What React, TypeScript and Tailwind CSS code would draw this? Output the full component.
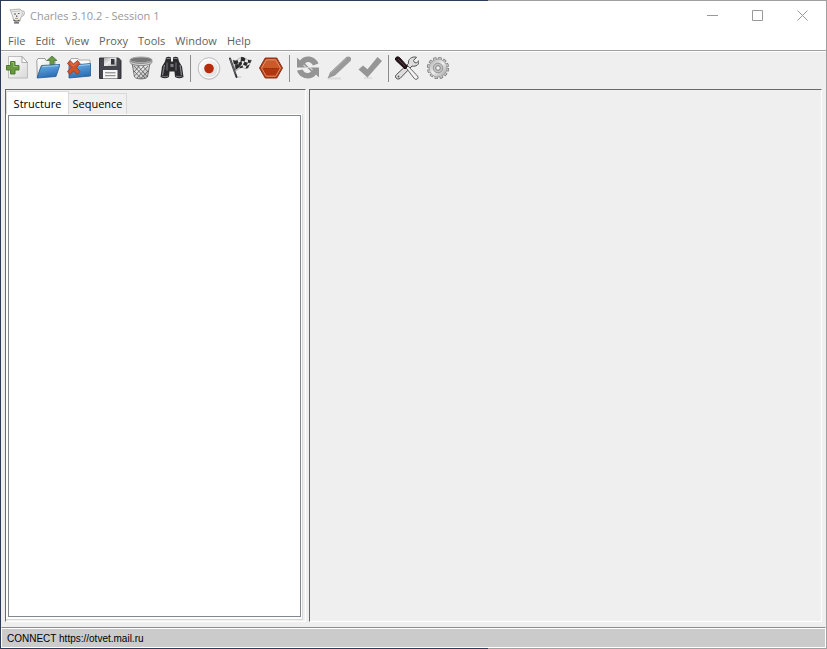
import type { ReactNode } from "react";

const menuItems = ["File", "Edit", "View", "Proxy", "Tools", "Window", "Help"];

interface IconProps {
  children: ReactNode;
}

function Icon({ children }: IconProps) {
  return (
    <svg viewBox="0 0 24 24" className="block size-6" aria-hidden="true">
      {children}
    </svg>
  );
}

function NewIcon() {
  return (
    <Icon>
      <path d="M3.5 .5h13.500l5.5 6v15.500h-19z" fill="url(#paper)" stroke="#b0b0b0" strokeWidth=".8" />
      <path d="M17 .5v6h5.5z" fill="#fff" stroke="#999" strokeWidth=".8" />
      <path d="M5.500 5.500H10v4h4v4.500h-4v4H5.500v-4h-4V9.500h4z" fill="#68993f" stroke="#4c7a31" />
      <path d="M6.500 6.500h2v4h4" fill="none" stroke="#9cc77c" strokeWidth=".8" />
    </Icon>
  );
}

function OpenIcon() {
  return (
    <Icon>
      <path d="M.8 4.5 2 2.500h7l1 2h9v6H5L1.300 21z" fill="url(#paper)" stroke="#888" strokeWidth=".8" />
      <path d="M16 0l5 4.500h-3V9h-4V4.500h-3z" fill="#6c9948" stroke="#4d7a34" strokeWidth=".8" />
      <path d="M5.500 9.500 24 8.500 20 20.500 1 22z" fill="url(#blue)" stroke="#245b94" strokeWidth=".8" />
      <path d="M6.300 10.600 22.500 9.600" stroke="#a7d0f2" strokeWidth=".9" />
    </Icon>
  );
}

function CloseIcon() {
  return (
    <Icon>
      <path d="M3 4.500 4 2.500h7l1 1.500h11v8H3z" fill="#fafafa" stroke="#999" strokeWidth=".8" />
      <path d="M2 9.500 23.500 7.500V20L2 22z" fill="url(#blue)" stroke="#245b94" strokeWidth=".8" />
      <path d="M11 9.700 23 8.500" stroke="#a7d0f2" strokeWidth=".9" />
      <path
        d="M3 4.500 6.500 8l4-3.500 2.500 3-3.500 4 3.500 4-2.500 3-4-3.500L3 18.500l-2.500-3 3.500-4-3.500-4z"
        fill="#d4512c"
        stroke="#a23b22"
        strokeWidth=".9"
      />
      <path d="M3.500 7l3 3L10 6.500" fill="none" stroke="#ea8561" strokeWidth=".9" />
    </Icon>
  );
}

function SaveIcon() {
  return (
    <Icon>
      <path d="M1.500 2h19L23 4.500v18H1.500z" fill="#45454e" stroke="#292930" strokeWidth=".9" />
      <path d="M6 1.500h12.500V10H6z" fill="url(#metal)" />
      <path d="M13 3h3.500v5.500H13z" fill="#33333b" />
      <path d="M5 14h14.500v8.500H5z" fill="#f7f7f7" />
      <path d="M7 16.800h10.500M7 19.700h10.500" stroke="#777" />
    </Icon>
  );
}

function TrashIcon() {
  return (
    <Icon>
      <path d="M2.500 4h19l-3 17c-2 2.500-11 2.500-13 0z" fill="url(#metal)" stroke="#555" strokeWidth=".8" />
      <path
        d="M5 10l11 12M7 8l11.500 13M12 8l7 8M5 15l7 7.500M19 10 8 22M17 8 5.500 20M12 8l-7 8M19 15l-7 7.500"
        stroke="#575757"
        strokeWidth=".8"
      />
      <ellipse cx="12" cy="3.800" rx="11" ry="2.800" fill="#777" stroke="#aaa" />
      <path d="M1 4.500c2 4 20 4 22 0v2c-2 4-20 4-22 0z" fill="#d6d6d6" stroke="#6e6e6e" strokeWidth=".7" />
    </Icon>
  );
}

function FindIcon() {
  return (
    <Icon>
      <path
        d="M6 1.500q2.500-1.500 5 0v4h2v-4q2.500-1.500 5 0l1 4 3 5L23.500 21q-4 2.500-8.500 0l-.5-5.500h-5L9 21q-4 2.500-8.500 0L2 10.500l3-5z"
        fill="#2a2a2d"
      />
      <path d="M6.500 2.500h4M13.500 2.500h4M4.500 9l-2 10M20 9l1.500 10" stroke="#85858d" strokeWidth="1.200" />
      <path d="M7 6.500v8M16 6.500v8" stroke="#5e5e66" strokeWidth="1.500" />
      <path d="M10.500 8h3v3h-3z" fill="#7c7c83" />
      <path d="M1.800 20q3.500 1.500 6.500 0M15.700 20q3.500 1.500 6.500 0" fill="none" stroke="#77777e" />
    </Icon>
  );
}

function RecordIcon() {
  return (
    <Icon>
      <circle cx="12" cy="12.500" r="10.800" fill="url(#paper)" stroke="#b5b5b5" strokeWidth=".9" />
      <circle cx="12" cy="12.500" r="9.300" fill="none" stroke="#fff" />
      <circle cx="12" cy="12.500" r="4.800" fill="#b52b0c" />
    </Icon>
  );
}

function FlagIcon() {
  return (
    <Icon>
      <path d="M8 21h5" stroke="#d2d2d2" strokeWidth="1.500" />
      <path
        d="M5 4C9 7 11 0 15 1.500S20 5 23.500 4L20 12c-4 2-5-2-8 0s-3 3-5 2z"
        fill="#e8e8e8"
        stroke="#777"
        strokeWidth=".5"
      />
      <path
        d="M5 4q2.500 1.500 4.500 0l1 3Q8 9 6 8zM13 1.300q2.500-1 4.500 1.500l-1 3q-2-1.500-4 0zM10.500 7l3-2 .5 3-2.500 3zM16.500 5.800q2 1 3.500.7L18.500 10q-2-.5-3.500-1.500zM20 3.700q1.500.8 3.500.3l-1.300 3-2.200-.3zM7 8.500l3.500-.5 1 3-4 3zM18.500 10l3-1.500L20 12l-2.500.5zM11.500 11l3-1.700.5 2.200-3 .7z"
        fill="#292929"
      />
      <path d="M2 2.500 8.500 21" stroke="#36363a" strokeWidth="2" strokeLinecap="round" />
      <path d="M2 3l5.500 15" stroke="#88888e" strokeWidth=".6" />
    </Icon>
  );
}

function StopIcon() {
  return (
    <Icon>
      <path d="M6.200 2h11.600L23.500 12l-5.700 10H6.200L.5 12z" fill="#b2370f" stroke="#8a3518" />
      <path d="M7.200 3.800h9.600l4.700 8.200h-19z" fill="#cb5a29" />
      <path d="M7.200 3.800h9.600l4.700 8.200-4.700 8.200H7.200L2.500 12z" fill="none" stroke="#e7a07c" strokeWidth=".9" />
      <path d="M5 12.500h14" stroke="#8c2c10" strokeDasharray="1 1" />
    </Icon>
  );
}

function RepeatIcon() {
  return (
    <Icon>
      <path d="M1 1.500 4 4.500C8-1.500 19-1 22.500 7.500L17 9.500C15 6 12 5 9 7.500l4 4H1z" fill="#949494" />
      <path d="M23 21.500l-3-3C16 24.500 4 24 1 14.500l5.500-1C8.500 17.500 12 18 15 15.500l-4-4h12z" fill="#949494" />
      <path d="M13 11.500h-3L7.500 9M11 11.500h3l2.500 2.500" fill="none" stroke="#d5d5d5" strokeWidth="1.200" />
    </Icon>
  );
}

function EditIcon() {
  return (
    <Icon>
      <path d="M1 22.500h13" stroke="#dadada" strokeWidth="2" />
      <path d="M.5 22.500 3 16.500 18.500 1.800Q21-.5 23 1t.5 4L8 19.500z" fill="#999" />
      <path d="M4 17 19 2.500" stroke="#b2b2b2" strokeWidth=".8" />
    </Icon>
  );
}

function ValidateIcon() {
  return (
    <Icon>
      <path d="M6 22h8" stroke="#dadada" strokeWidth="1.500" />
      <path d="M.5 13.500 5 9.500l4.500 3.700L19.500 1 24 5 9.500 21.500z" fill="#969696" />
    </Icon>
  );
}

function ToolsIcon() {
  return (
    <Icon>
      <path
        d="M21.500 1.200 18.500 4.500l1 2 2 .5L24 4.500c.5 4-3 6.500-7 5.500L5 22.500q-2.500 1.500-4-.5t.5-3.500l12-11c-1-4 3.500-7.500 8-6.300z"
        fill="#dedede"
        stroke="#505050"
      />
      <circle cx="3.500" cy="20.500" r=".9" fill="#555" />
      <path d="M10 10.500 12 9l10.500 11q1.500 2-.2 3t-3-.5z" fill="#f2f2f2" stroke="#555" strokeWidth=".9" />
      <path d="M1 1.500q1.500-1.500 3.500 0l8 9L10 13 1 4.500q-1.500-1.500 0-3z" fill="#26131b" stroke="#190d12" />
      <path d="M3 3l7 7" stroke="#674d56" strokeWidth=".8" />
    </Icon>
  );
}

function SettingsIcon() {
  return (
    <Icon>
      <circle cx="12" cy="12" r="9.500" fill="none" stroke="#777" strokeWidth="3.200" strokeDasharray="3.200 1.774" />
      <circle cx="12" cy="12" r="9" fill="url(#metal)" stroke="#8a8a8a" strokeWidth=".8" />
      <circle
        cx="12"
        cy="12"
        r="9.500"
        fill="none"
        stroke="#c4c4c4"
        strokeWidth="1.800"
        strokeDasharray="2 2.974"
        strokeDashoffset="-.6"
      />
      <circle cx="12" cy="12" r="4.800" fill="#c2c2c2" stroke="#8e8e8e" strokeWidth=".9" />
      <circle cx="12" cy="12" r="2.300" fill="#efefef" stroke="#777" strokeWidth=".9" />
    </Icon>
  );
}

// Gradients shared by the toolbar icons
function IconGradients() {
  return (
    <svg width="0" height="0" className="absolute" aria-hidden="true">
      <defs>
        <linearGradient id="paper" x1="0" y1="0" x2="1" y2="1">
          <stop offset="0" stopColor="#fff" />
          <stop offset="1" stopColor="#d9d9d9" />
        </linearGradient>
        <linearGradient id="blue" x1="0" y1="0" x2=".3" y2="1">
          <stop offset="0" stopColor="#71b2e8" />
          <stop offset="1" stopColor="#2c6fb5" />
        </linearGradient>
        <linearGradient id="metal" x1="0" y1="0" x2="1" y2="1">
          <stop offset="0" stopColor="#a9a9a9" />
          <stop offset=".5" stopColor="#ededed" />
          <stop offset="1" stopColor="#9c9c9c" />
        </linearGradient>
      </defs>
    </svg>
  );
}

const toolGroups = [
  [
    { label: "New session", icon: <NewIcon /> },
    { label: "Open session", icon: <OpenIcon /> },
    { label: "Close session", icon: <CloseIcon /> },
    { label: "Save session", icon: <SaveIcon /> },
    { label: "Clear session", icon: <TrashIcon /> },
    { label: "Find", icon: <FindIcon /> },
  ],
  [
    { label: "Record", icon: <RecordIcon /> },
    { label: "Throttle", icon: <FlagIcon /> },
    { label: "Breakpoints", icon: <StopIcon /> },
  ],
  [
    { label: "Repeat", icon: <RepeatIcon />, disabled: true },
    { label: "Edit request", icon: <EditIcon />, disabled: true },
    { label: "Validate", icon: <ValidateIcon />, disabled: true },
  ],
  [
    { label: "Tools", icon: <ToolsIcon /> },
    { label: "Settings", icon: <SettingsIcon /> },
  ],
];

function TitleBar() {
  const controlClass = "flex h-full w-[45px] items-center justify-center";

  return (
    <header className="flex h-[29px] items-center bg-white pr-px pl-2 text-[#999]">
      <svg viewBox="0 0 16 16" className="size-4" aria-hidden="true">
        <path
          d="M1 1.500q2 1 3 0l7-.5 1.500 2q3-1 3 2t-3.500 4l-1 4q-3 3-6 0L3.500 8 2 4z"
          fill="#ededeb"
          stroke="#a3a3a3"
          strokeWidth=".8"
        />
        <path d="M3 3.500 11 3M12.500 4.500q1.500 0 1 1.500t-1.500 1.500" fill="none" stroke="#bbb" strokeWidth=".8" />
        <path d="M5 6h2M9 5.500h1.500M7.500 7.500l.5 1.500M4.500 12q3 2 6 0M5 14.800h5" fill="none" stroke="#555" strokeWidth="1.200" />
        <path d="M6 10.500h3" stroke="#b89b72" />
      </svg>
      <h1 className="ml-[5px] flex-1 text-[11px] leading-4">Charles 3.10.2 - Session 1</h1>
      <button type="button" aria-label="Minimize" className={controlClass}>
        <svg viewBox="0 0 11 11" className="size-[11px]">
          <path d="M0 5.500h11" stroke="#999" />
        </svg>
      </button>
      <button type="button" aria-label="Maximize" className={controlClass}>
        <svg viewBox="0 0 11 11" className="size-[11px]">
          <path d="M.5 .5h10v10H.5z" fill="none" stroke="#999" />
        </svg>
      </button>
      <button type="button" aria-label="Close" className={controlClass}>
        <svg viewBox="0 0 11 11" className="size-[11px]">
          <path d="M.5 .5l10 10M10.500 .5l-10 10" stroke="#999" />
        </svg>
      </button>
    </header>
  );
}

function MenuBar() {
  return (
    <nav className="flex h-5 items-center gap-[10px] bg-white pt-0.5 pl-[7px] text-[11px] leading-4 text-[#5f5f5f]">
      {menuItems.map((item) => (
        <button key={item} type="button">
          {item}
        </button>
      ))}
    </nav>
  );
}

function Toolbar() {
  return (
    <div role="toolbar" className="flex h-[39px] border-t border-[#a0a0a0] pb-1 pl-px shadow-[inset_0_1px_white]">
      {toolGroups.map((tools, index) => (
        <div key={index} className="flex items-center">
          {index > 0 && <span className="mr-[3px] ml-[2px] h-[27px] w-px bg-[#8c8c8c]" />}
          {tools.map((tool) => (
            <button
              key={tool.label}
              type="button"
              aria-label={tool.label}
              disabled={"disabled" in tool}
              className="h-6 w-[31px] pl-[3px]"
            >
              {tool.icon}
            </button>
          ))}
        </div>
      ))}
    </div>
  );
}

function Navigator() {
  return (
    <section className="flex w-[301px] shrink-0 flex-col border border-t-[#696969] border-r-white border-b-white border-l-[#696969] pt-px pr-[2px] pb-px">
      <div role="tablist" className="flex h-[23px] items-end text-[11px] leading-4 text-black">
        <button
          type="button"
          role="tab"
          aria-selected="true"
          className="h-[23px] w-[63px] border border-b-0 border-[#d9d9d9] bg-white pt-0.5"
        >
          Structure
        </button>
        <button
          type="button"
          role="tab"
          aria-selected="false"
          className="h-[21px] w-[58px] border border-b-0 border-l-0 border-[#d9d9d9] bg-[#f0f0f0]"
        >
          Sequence
        </button>
      </div>
      <div
        role="tabpanel"
        className="flex flex-1 flex-col border-r border-b border-[#d9d9d9] bg-white pt-px pr-px pb-[2px] pl-[2px]"
      >
        <div className="flex-1 border border-[#828790] bg-white" />
      </div>
    </section>
  );
}

export default function App() {
  return (
    <div className="flex h-screen flex-col bg-linear-to-r from-[#2d3a58] from-59% to-[#a0a0a0] to-59% p-px font-['Open_Sans','Noto_Sans',sans-serif]">
      <IconGradients />
      <div className="flex min-h-0 flex-1 flex-col bg-[#efefef]">
        <TitleBar />
        <MenuBar />
        <Toolbar />
        <main className="flex min-h-0 flex-1 gap-[3px] pr-1 pb-[5px] pl-1">
          <Navigator />
          <section className="flex-1 border border-t-[#696969] border-r-white border-b-white border-l-[#696969]" />
        </main>
        <footer className="border border-t-[#8c8c8c] border-r-white border-b-white border-l-white">
          <p className="border-t border-white bg-[#cbcbcb] px-[5px] pt-0.5 font-['Liberation_Sans',Arial,sans-serif] text-[10px] leading-4 text-black">
            CONNECT https://otvet.mail.ru
          </p>
        </footer>
      </div>
    </div>
  );
}
